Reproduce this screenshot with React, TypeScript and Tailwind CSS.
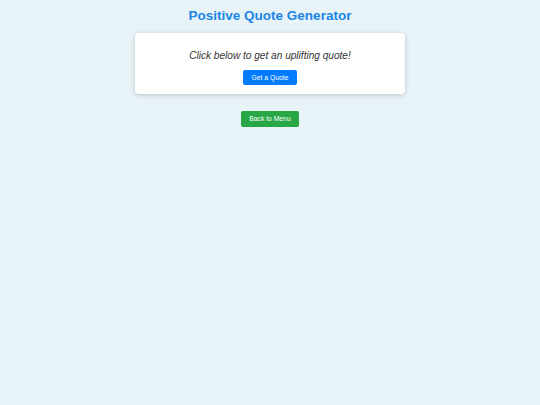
export default function App() {
  return (
    <div className="min-h-[405px] w-full bg-[#e8f3f8] font-['Liberation_Sans',Arial,sans-serif] flex flex-col items-center">
      <h1 className="mt-[8px] text-[13.5px] leading-[16px] font-bold text-[#1a86e8]">
        Positive Quote Generator
      </h1>

      <div className="mt-[9px] w-[270px] rounded-[4px] bg-white shadow-[0_1px_5px_rgba(0,0,0,0.2)] px-[13.5px] pt-[17px] pb-[9.5px] flex flex-col items-center">
        <p className="text-[10.1px] leading-[12px] italic text-[#333333]">
          Click below to get an uplifting quote!
        </p>
        <button className="mt-[7.5px] h-[15px] rounded-[2px] bg-[#007bff] px-[9px] text-[6.75px] leading-[15px] text-white">
          Get a Quote
        </button>
      </div>

      <button className="mt-[16.5px] h-[16px] rounded-[2px] bg-[#28a745] px-[8.5px] text-[6.75px] leading-[16px] text-white">
        Back to Menu
      </button>
    </div>
  );
}
